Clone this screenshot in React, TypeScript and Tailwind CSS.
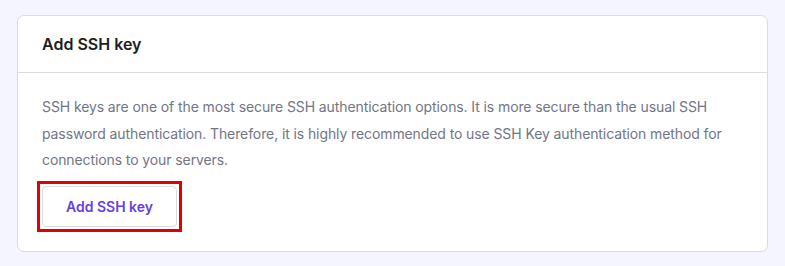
import React from 'react';

export default function App() {
    return (
        <div className="min-h-screen bg-[#f4f5ff] px-[17px] pt-[15px] pb-[15px] font-['Inter',sans-serif]">
            {/* Card */}
            <section className="bg-white border border-[#dadce0] rounded-[7px]">
                <header className="h-[57px] flex items-center px-6 border-b border-[#dadce0]">
                    <h2 className="text-[16px] font-semibold text-[#1d1e20]">Add SSH key</h2>
                </header>

                <div className="px-6 pt-[21px] pb-[19px]">
                    <p className="text-[14px] leading-[26.5px] tracking-[-0.1px] text-[#727586]">
                        SSH keys are one of the most secure SSH authentication options. It is more secure than the usual SSH
                        password authentication. Therefore, it is highly recommended to use SSH Key authentication method for
                        connections to your servers.
                    </p>

                    <div className="mt-[7px] inline-flex border-[3px] border-[#e00000] p-[2px] -ml-[5px]">
                        <button className="w-[135px] h-[41px] border border-[#dadce0] rounded-[4px] bg-white text-[14px] font-semibold text-[#673de6]">
                            Add SSH key
                        </button>
                    </div>
                </div>
            </section>
        </div>
    );
}
